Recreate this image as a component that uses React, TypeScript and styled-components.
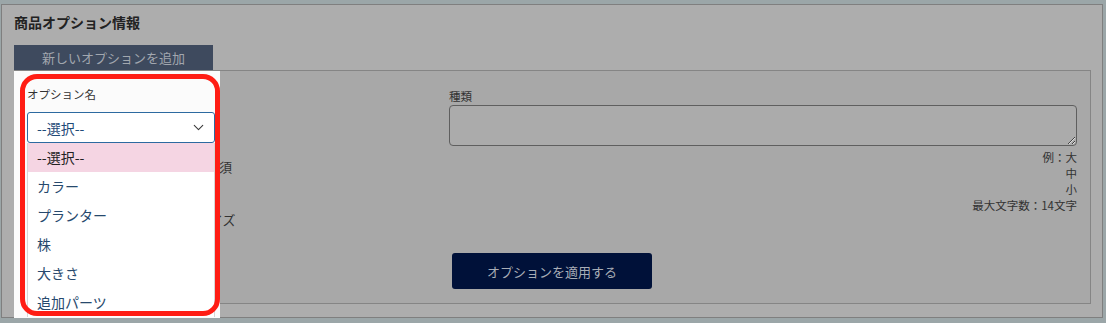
import React from "react";
import styled, { createGlobalStyle } from "styled-components";
import { ChevronDown } from "lucide-react";

const options = ["--選択--", "カラー", "プランター", "株", "大きさ", "追加パーツ"];

////page is dimmed by the tutorial overlay, colours below are the dimmed ones
const GlobalStyle = createGlobalStyle`
  body {
    margin: 0;
    background: #9ba6a8;
    font-family: "Noto Sans CJK JP", "Noto Sans", sans-serif;
    color: #2c2c2c;
  }
`;

export default function App() {
  return (
    <>
      <GlobalStyle />
      <Card>
        <Title>商品オプション情報</Title>
        <Tab>新しいオプションを追加</Tab>
        <Panel>
          <Spotlight />
          <Ring />
          <Fields>
            <LeftColumn>
              <FieldLabel $front>オプション名</FieldLabel>
              <SelectWrap>
                <SelectBox>
                  <span>--選択--</span>
                  <ChevronDown size={17} strokeWidth={1.5} color="#3a3a3a" />
                </SelectBox>
                <Dropdown>
                  {options.map((o, i) => (
                    <Option key={o} $active={i === 0}>
                      {o}
                    </Option>
                  ))}
                </Dropdown>
              </SelectWrap>
              {/* rows behind the spotlight, only their ends show */}
              <HiddenRow $gap={14} $indent={153}>入力必須</HiddenRow>
              <HiddenRow $gap={33} $indent={170}>サイズ</HiddenRow>
            </LeftColumn>
            <RightColumn>
              <FieldLabel>種類</FieldLabel>
              <TextArea />
              <Hints>
                <div>例：大</div>
                <div>中</div>
                <div>小</div>
                <div>最大文字数：14文字</div>
              </Hints>
            </RightColumn>
          </Fields>
          <ButtonRow>
            <ApplyButton>オプションを適用する</ApplyButton>
          </ButtonRow>
        </Panel>
      </Card>
    </>
  );
}

const Card = styled.section`
  margin: 4px 0 0 1px;
  width: 1102px;
  box-sizing: border-box;
  border: 1px solid #7f7f7f;
  background: #adadad;
  padding: 7px 11px 13px 12px;
`;

const Title = styled.h2`
  margin: 0;
  font-size: 14px;
  line-height: 20px;
  font-weight: 700;
  color: #222;
`;

const Tab = styled.div`
  margin-top: 13px;
  width: 199px;
  height: 25px;
  line-height: 25px;
  text-align: center;
  background: #3e4a5e;
  color: #a2a7af;
  font-size: 13px;
`;

const Panel = styled.div`
  position: relative;
  border: 1px solid #858585;
  background: #a8a8a8;
  padding: 17px 13px 14px 12px;
`;

//white spotlight box around the highlighted field
const Spotlight = styled.div`
  position: absolute;
  left: -1px;
  top: 0;
  width: 206px;
  height: 247px;
  background: #fbfbfb;
  z-index: 1;
`;

const Ring = styled.div`
  position: absolute;
  left: 5px;
  top: 3px;
  width: 200px;
  height: 242px;
  box-sizing: border-box;
  border: 5px solid #ff1d14;
  border-radius: 17px;
  z-index: 3;
  pointer-events: none;
`;

const Fields = styled.div`
  display: grid;
  grid-template-columns: 408px 1fr;
  column-gap: 14px;
  align-items: start;
`;

const LeftColumn = styled.div`
  margin-top: -2px;
  display: flex;
  flex-direction: column;
`;

const RightColumn = styled.div`
  display: flex;
  flex-direction: column;
`;

const FieldLabel = styled.label<{ $front?: boolean }>`
  position: relative;
  z-index: ${(p) => (p.$front ? 2 : "auto")};
  font-size: 11.5px;
  line-height: 16px;
  color: #333;
`;

const SelectWrap = styled.div`
  position: relative;
  z-index: 2;
  margin-top: 10px;
  width: 188px;
`;

const SelectBox = styled.div`
  height: 31px;
  box-sizing: border-box;
  border: 1px solid #2c6aa0;
  border-radius: 3px;
  background: #fff;
  padding: 0 7px 0 9px;
  display: flex;
  align-items: center;
  justify-content: space-between;
  font-size: 14px;
  color: #1f4b78;
`;

const Dropdown = styled.ul`
  position: absolute;
  top: 100%;
  left: 0;
  width: 188px;
  margin: 0;
  padding: 0;
  list-style: none;
  background: #fff;
  border-left: 1px solid #d6d6d6;
  border-right: 1px solid #d6d6d6;
  box-sizing: border-box;
`;

const Option = styled.li<{ $active?: boolean }>`
  height: 29px;
  line-height: 29px;
  padding-left: 9px;
  font-size: 14px;
  color: ${(p) => (p.$active ? "#222" : "#27496d")};
  background: ${(p) => (p.$active ? "#f5d5e3" : "#fff")};
`;

const HiddenRow = styled.div<{ $gap: number; $indent: number }>`
  margin-top: ${(p) => p.$gap}px;
  padding-left: ${(p) => p.$indent}px;
  font-size: 13px;
  line-height: 20px;
  color: #333;
  white-space: nowrap;
`;

const TextArea = styled.textarea`
  margin-top: 1px;
  height: 41px;
  box-sizing: border-box;
  border: 1px solid #5f5f5f;
  border-radius: 4px;
  background: #ababab;
  font-family: inherit;
`;

const Hints = styled.div`
  margin-top: 3px;
  text-align: right;
  font-size: 11.5px;
  line-height: 16px;
  color: #333;
`;

const ButtonRow = styled.div`
  margin-top: 23px;
  display: flex;
  justify-content: center;
`;

const ApplyButton = styled.button`
  width: 200px;
  height: 36px;
  border: none;
  border-radius: 3px;
  background: #001139;
  color: #a8adb6;
  font-family: inherit;
  font-size: 13px;
`;
